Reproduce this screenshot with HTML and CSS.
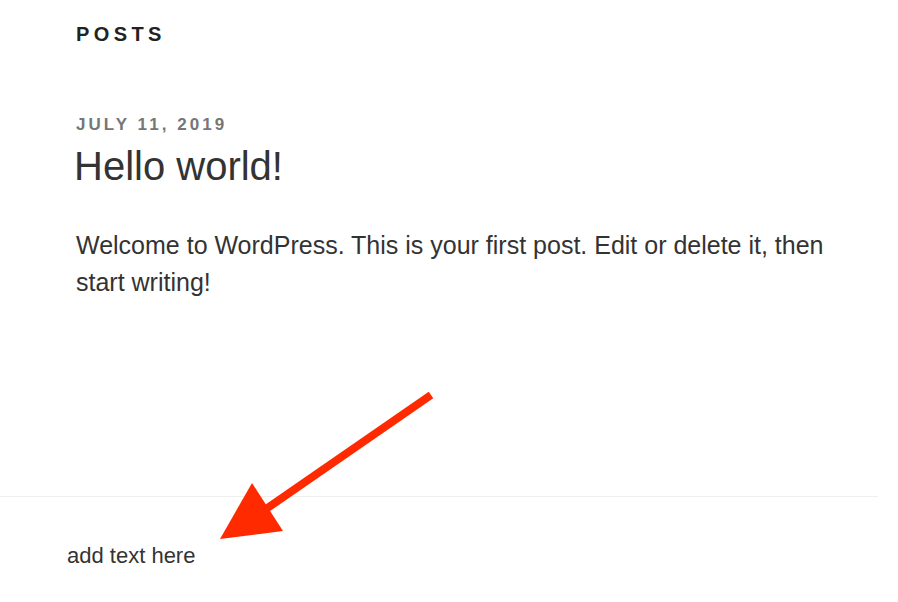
FILE: index.html
```html
<!DOCTYPE html>
<html lang="en">
<head>
  <meta charset="UTF-8" />
  <title>Posts</title>
  <link rel="stylesheet" href="styles.css">
</head>
<body>

  <!-- Posts -->
  <main class="site-content">
    <h2 class="page-title">Posts</h2>

    <article class="post">
      <div class="post-date">July 11, 2019</div>
      <h1 class="post-title">Hello world!</h1>
      <p class="post-body">Welcome to WordPress. This is your first post. Edit or delete it, then start writing!</p>
    </article>
  </main>

  <!-- Footer -->
  <footer class="site-footer">
    <p class="footer-text">add text here</p>
  </footer>

  <!-- Annotation arrow -->
  <svg class="annotation" width="898" height="602" viewBox="0 0 898 602">
    <line x1="431" y1="395" x2="266" y2="509" stroke="#ff2a00" stroke-width="8" />
    <polygon points="252,483 283,531 220,539" fill="#ff2a00" />
  </svg>

</body>
</html>
```

FILE: styles.css
```css
/* General */
body {
  margin: 0;
  padding: 0;
  background: #fff;
  color: #333;
  font-family: "Liberation Sans", Arial, sans-serif;
}

/* Main Content */
.site-content {
  padding: 21px 0 0 76px;
  height: 474px;
  box-sizing: border-box;
}

.page-title {
  margin: 0;
  font-size: 20px;
  font-weight: 800;
  letter-spacing: 0.22em;
  text-transform: uppercase;
  color: #222;
  line-height: 26px;
}

.post {
  margin-top: 67px;
}

.post-date {
  font-size: 17px;
  font-weight: bold;
  letter-spacing: 0.18em;
  text-transform: uppercase;
  color: #767676;
  line-height: 22px;
}

.post-title {
  margin: 7px 0 0 -2px;
  font-size: 40px;
  font-weight: 300;
  color: #333;
  line-height: 46px;
}

.post-body {
  margin: 38px 0 0;
  font-size: 25px;
  line-height: 37px;
  color: #333;
  max-width: 780px;
}

/* Footer */
.site-footer {
  border-top: 1px solid #eee;
  margin-top: 22px;
  width: 878px;
}

.footer-text {
  margin: 46px 0 0 67px;
  font-size: 22px;
  color: #333;
  line-height: 26px;
}

/* Annotation */
.annotation {
  position: absolute;
  top: 0;
  left: 0;
  pointer-events: none;
}
```
